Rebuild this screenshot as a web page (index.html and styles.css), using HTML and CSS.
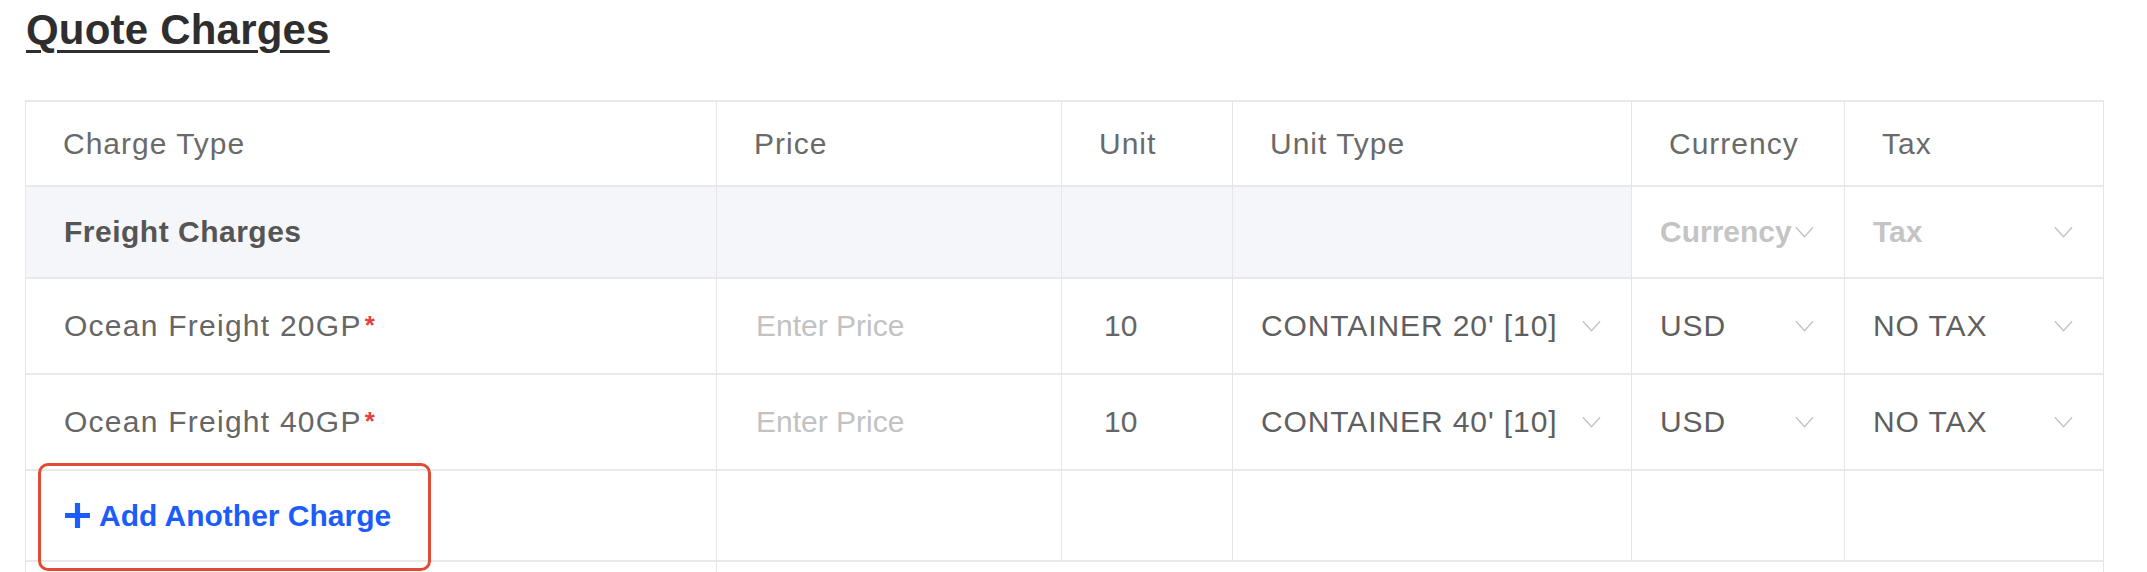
FILE: index.html
```html
<!DOCTYPE html>
<html lang="en">
<head>
<meta charset="utf-8">
<title>Quote Charges</title>
<link rel="stylesheet" href="styles.css">
</head>
<body>
<div class="page">
  <h2 class="title">Quote Charges</h2>
  <div class="charges">
    <div class="cell head">Charge Type</div>
    <div class="cell head">Price</div>
    <div class="cell head">Unit</div>
    <div class="cell head">Unit Type</div>
    <div class="cell head">Currency</div>
    <div class="cell head">Tax</div>

    <div class="cell group name-cell"><span class="group-name">Freight Charges</span></div>
    <div class="cell group"></div>
    <div class="cell group"></div>
    <div class="cell group"></div>
    <div class="cell select"><span class="ph-bold">Currency</span><svg class="chev" viewBox="0 0 20 12"><polyline points="1,1 10,11 19,1"/></svg></div>
    <div class="cell select"><span class="ph-bold">Tax</span><svg class="chev" viewBox="0 0 20 12"><polyline points="1,1 10,11 19,1"/></svg></div>

    <div class="cell name-cell"><span class="name">Ocean Freight 20GP</span><span class="req">*</span></div>
    <div class="cell input"><span class="placeholder">Enter Price</span></div>
    <div class="cell input unit">10</div>
    <div class="cell select"><span class="val">CONTAINER 20' [10]</span><svg class="chev" viewBox="0 0 20 12"><polyline points="1,1 10,11 19,1"/></svg></div>
    <div class="cell select"><span class="val">USD</span><svg class="chev" viewBox="0 0 20 12"><polyline points="1,1 10,11 19,1"/></svg></div>
    <div class="cell select"><span class="val">NO TAX</span><svg class="chev" viewBox="0 0 20 12"><polyline points="1,1 10,11 19,1"/></svg></div>

    <div class="cell name-cell"><span class="name">Ocean Freight 40GP</span><span class="req">*</span></div>
    <div class="cell input"><span class="placeholder">Enter Price</span></div>
    <div class="cell input unit">10</div>
    <div class="cell select"><span class="val">CONTAINER 40' [10]</span><svg class="chev" viewBox="0 0 20 12"><polyline points="1,1 10,11 19,1"/></svg></div>
    <div class="cell select"><span class="val">USD</span><svg class="chev" viewBox="0 0 20 12"><polyline points="1,1 10,11 19,1"/></svg></div>
    <div class="cell select"><span class="val">NO TAX</span><svg class="chev" viewBox="0 0 20 12"><polyline points="1,1 10,11 19,1"/></svg></div>

    <div class="cell add-cell">
      <button class="add-btn" type="button">
        <svg class="plus" viewBox="0 0 26 26"><path d="M13 1v24M1 13h24"/></svg>
        <span>Add Another Charge</span>
      </button>
    </div>
    <div class="cell"></div>
    <div class="cell"></div>
    <div class="cell"></div>
    <div class="cell"></div>
    <div class="cell"></div>

    <div class="cell"></div>
    <div class="cell span-rest"></div>
  </div>
</div>
</body>
</html>
```

FILE: styles.css
```css
* {
  box-sizing: border-box;
}

html, body {
  margin: 0;
  padding: 0;
  background: #ffffff;
}

body {
  font-family: "Liberation Sans", Arial, sans-serif;
  overflow: hidden;
}

.page {
  padding: 6px 0 0 25px;
  width: 2104px;
}

.title {
  margin: 0 0 46px 1px;
  font-size: 42px;
  line-height: 48px;
  font-weight: 700;
  color: #2e2e2e;
  letter-spacing: 0.2px;
  text-decoration: underline;
  text-decoration-thickness: 3px;
  text-underline-offset: 6px;
  display: inline-block;
}

.charges {
  display: grid;
  grid-template-columns: 691px 345px 171px 399px 213px 259px;
  grid-template-rows: 85px 92px 96px 96px 91px 60px;
  border-left: 1px solid #e6e6e6;
  border-top: 2px solid #e9e9e9;
  width: 2079px;
}

.cell {
  border-right: 1px solid #e6e6e6;
  border-bottom: 2px solid #e9e9e9;
  display: flex;
  align-items: center;
  font-size: 30px;
  color: #666666;
  min-width: 0;
}

.head {
  padding-left: 37px;
  color: #6a6a6a;
  letter-spacing: 1px;
}

.group {
  background: #f5f6f9;
}

.name-cell {
  padding-left: 38px;
}

.group-name {
  font-weight: 700;
  color: #555555;
  letter-spacing: 0.5px;
}

.name {
  color: #666666;
  letter-spacing: 1.25px;
}

.req {
  color: #e5423d;
  font-weight: 700;
  font-size: 26px;
  align-self: flex-start;
  margin-top: 31px;
  margin-left: 3px;
}

.input {
  padding-left: 39px;
}

.placeholder {
  color: #c2c2c2;
}

.unit {
  padding-left: 42px;
  color: #666666;
}

.select {
  justify-content: space-between;
  padding: 0 30px 0 28px;
}

.val {
  color: #5f5f5f;
  letter-spacing: 0.9px;
  white-space: nowrap;
}

.ph-bold {
  font-weight: 700;
  color: #c4c4c4;
}

.chev {
  width: 19px;
  height: 12px;
  flex: none;
  fill: none;
  stroke: #c2c2c2;
  stroke-width: 1.4;
}

.add-cell {
  position: relative;
  padding-left: 38px;
}

.add-cell::after {
  content: "";
  position: absolute;
  left: 12px;
  top: -8px;
  width: 387px;
  height: 102px;
  border: 3px solid #e14b33;
  border-radius: 10px;
  pointer-events: none;
}

.add-btn {
  display: flex;
  align-items: center;
  gap: 8px;
  padding: 0;
  border: none;
  background: none;
  font-family: inherit;
  font-size: 30px;
  font-weight: 700;
  color: #1c5cfb;
  cursor: pointer;
}

.plus {
  width: 27px;
  height: 27px;
  fill: none;
  stroke: #1c5cfb;
  stroke-width: 5;
}

.span-rest {
  grid-column: 2 / 7;
}
```
